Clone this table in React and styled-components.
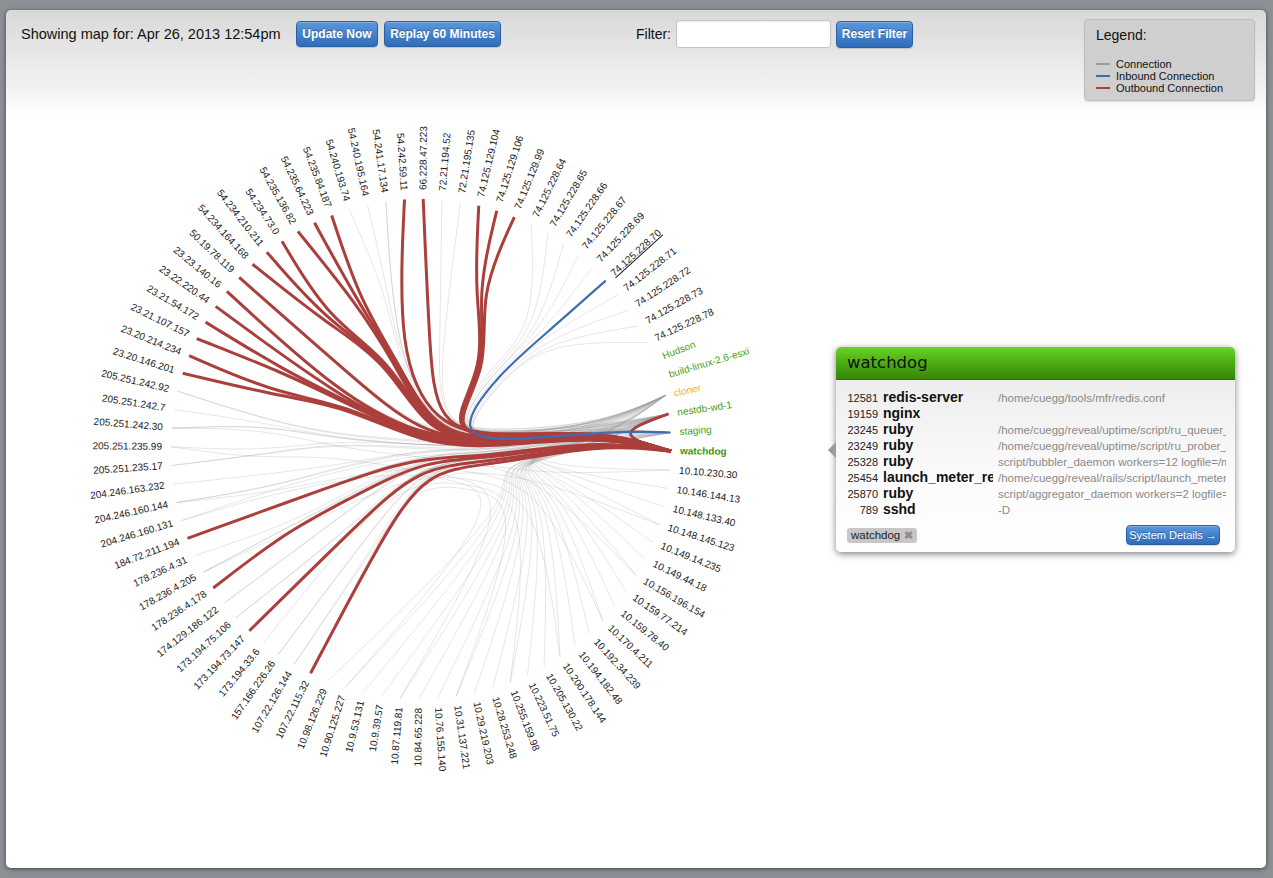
import React from 'react';
import styled, { createGlobalStyle, css } from 'styled-components';

const GlobalStyle = createGlobalStyle`
  html, body { margin: 0; padding: 0; }
  body {
    background: #8c8f94;
    font-family: "Liberation Sans", Arial, sans-serif;
    width: 1273px;
    height: 878px;
    overflow: hidden;
  }
`;

/* ------------------------------------------------------------------ data */

const NAMES = [
  'watchdog',
  '10.10.230.30', '10.146.144.13', '10.148.133.40', '10.148.145.123', '10.149.14.235',
  '10.149.44.18', '10.156.196.154', '10.159.77.214', '10.159.78.40', '10.170.4.211',
  '10.192.34.239', '10.194.182.48', '10.200.178.144', '10.205.130.22', '10.223.51.75',
  '10.255.159.98', '10.28.253.248', '10.29.219.203', '10.31.137.221', '10.76.155.140',
  '10.84.65.228', '10.87.119.81', '10.9.39.57', '10.9.53.131', '10.90.125.227', '10.98.126.229',
  '107.22.115.32', '107.22.126.144', '157.166.226.26',
  '173.194.33.6', '173.194.73.147', '173.194.75.106', '174.129.186.122',
  '178.236.4.178', '178.236.4.205', '178.236.4.31', '184.72.211.194',
  '204.246.160.131', '204.246.160.144', '204.246.163.232',
  '205.251.235.17', '205.251.235.99', '205.251.242.30', '205.251.242.7', '205.251.242.92',
  '23.20.146.201', '23.20.214.234', '23.21.107.157', '23.21.54.172', '23.22.220.44', '23.23.140.16',
  '50.19.78.119',
  '54.234.164.168', '54.234.210.211', '54.234.73.0', '54.235.136.82', '54.235.64.223',
  '54.235.84.187', '54.240.193.74', '54.240.195.164', '54.241.17.134', '54.242.59.11',
  '66.228.47.223', '72.21.194.52', '72.21.195.135',
  '74.125.129.104', '74.125.129.106', '74.125.129.99',
  '74.125.228.64', '74.125.228.65', '74.125.228.66', '74.125.228.67', '74.125.228.69',
  '74.125.228.70', '74.125.228.71', '74.125.228.72', '74.125.228.73', '74.125.228.78',
  'Hudson', 'build-linux-2.6-esxi', 'cloner', 'nestdb-wd-1', 'staging',
];

const N = NAMES.length;
const R = 250;
const CX = 415;
const CY = 339;
const THETA0 = 0.5;
const angleOf = (i) => THETA0 + (i * 360) / N;

const HOSTS = { 0: 'bold', 79: 'green', 80: 'green', 81: 'yellow', 82: 'green', 83: 'green' };

/* ------------------------------------------------------- hierarchy */

function buildTree() {
  const root = { a: 0, r: 0, parent: null };
  const inner = { a: 3, r: 0.25 * R, parent: root };
  const hosts = { a: -4.5, r: 0.72 * R, parent: inner };
  const g10 = { a: 10, r: 0.5 * R, parent: inner };
  const leaves = NAMES.map((name, i) => ({ a: angleOf(i), r: R, parent: null }));

  Object.keys(HOSTS).forEach((k) => { leaves[k].parent = hosts; });
  for (let i = 1; i <= 26; i += 1) leaves[i].parent = g10;

  // external groups by first octet, sub groups by a distinguishing prefix
  const groups = {};
  for (let i = 27; i <= 78; i += 1) {
    const oct = NAMES[i].split('.');
    (groups[oct[0]] = groups[oct[0]] || []).push(i);
  }
  Object.values(groups).forEach((members) => {
    const a0 = angleOf(members[0]);
    const a1 = angleOf(members[members.length - 1]);
    const g = { a: (a0 + a1) / 2, r: 0.35 * R, parent: root };
    const two = new Set(members.map((m) => NAMES[m].split('.').slice(0, 2).join('.')));
    const depth = two.size > 1 ? 2 : 3;
    const subs = {};
    members.forEach((m) => {
      const key = NAMES[m].split('.').slice(0, depth).join('.');
      (subs[key] = subs[key] || []).push(m);
    });
    Object.values(subs).forEach((sm) => {
      if (sm.length < 2) { leaves[sm[0]].parent = g; return; }
      const s = {
        a: (angleOf(sm[0]) + angleOf(sm[sm.length - 1])) / 2,
        r: 0.62 * R,
        parent: g,
      };
      sm.forEach((m) => { leaves[m].parent = s; });
    });
  });
  return leaves;
}

const LEAVES = buildTree();

const xy = (n) => {
  const t = (n.a * Math.PI) / 180;
  return [n.r * Math.cos(t), n.r * Math.sin(t)];
};

function ancestors(n) {
  const out = [];
  let c = n;
  while (c) { out.push(c); c = c.parent; }
  return out;
}

function nodePath(s, t) {
  const as = ancestors(s);
  const at = ancestors(t);
  let lca = null;
  for (const a of as) { if (at.includes(a)) { lca = a; break; } }
  const up = as.slice(0, as.indexOf(lca) + 1);
  const down = at.slice(0, at.indexOf(lca)).reverse();
  return [...up, ...down];
}

function bundlePath(pts, beta = 0.85) {
  const j = pts.length - 1;
  const [x0, y0] = pts[0];
  const dx = pts[j][0] - x0;
  const dy = pts[j][1] - y0;
  const q = pts.map(([x, y], i) => {
    const t = i / j;
    return [beta * x + (1 - beta) * (x0 + t * dx), beta * y + (1 - beta) * (y0 + t * dy)];
  });
  let d = '';
  let px0; let py0; let px1; let py1; let state = 0;
  const f = (v) => v.toFixed(2);
  const bez = (x, y) => {
    d += `C${f((2 * px0 + px1) / 3)},${f((2 * py0 + py1) / 3)},${f((px0 + 2 * px1) / 3)},${f((py0 + 2 * py1) / 3)},${f((px0 + 4 * px1 + x) / 6)},${f((py0 + 4 * py1 + y) / 6)}`;
  };
  q.forEach(([x, y]) => {
    if (state === 0) { state = 1; d += `M${f(x)},${f(y)}`; }
    else if (state === 1) { state = 2; }
    else {
      if (state === 2) { state = 3; d += `L${f((5 * px0 + px1) / 6)},${f((5 * py0 + py1) / 6)}`; }
      bez(x, y);
    }
    px0 = px1; px1 = x; py0 = py1; py1 = y;
  });
  if (state === 3) { bez(px1, py1); d += `L${f(px1)},${f(py1)}`; }
  else if (state === 2) d += `L${f(px1)},${f(py1)}`;
  return d;
}

const edgeD = (s, t) => bundlePath(nodePath(LEAVES[s], LEAVES[t]).map(xy));

const RED = [27, 31, 34, 37, 46, 47, 48, 49, 50, 51, 52, 53, 54, 55, 56, 57, 58, 62, 63, 66, 67, 68, 82];

const GRAY = (() => {
  const e = [];
  const hs = [81, 82, 83];
  for (let i = 1; i <= 26; i += 1) e.push([i, hs[i % 3]]);
  for (let i = 1; i <= 26; i += 3) e.push([i, 27 + ((i * 5) % 19)]);
  for (let j = 27; j <= 78; j += 1) e.push([j, hs[j % 3]]);
  for (let j = 27; j <= 45; j += 2) e.push([j, 82]);
  for (let j = 46; j <= 62; j += 3) e.push([j, 81]);
  e.push([81, 83]);
  return e;
})();

/* --------------------------------------------------------------- styles */

const Panel = styled.div`
  margin: 10px 7px 0 6px;
  width: 1260px;
  height: 858px;
  border-radius: 5px;
  background: linear-gradient(#d8d8d8 0px, #f3f3f3 80px, #ffffff 105px);
  box-shadow: 0 1px 4px rgba(0, 0, 0, 0.55);
  display: flex;
  flex-direction: column;
  overflow: hidden;
`;

const Header = styled.header`
  height: 100px;
  flex: 0 0 100px;
  box-sizing: border-box;
  padding: 10px 11px 0 15px;
  display: flex;
  align-items: flex-start;
`;

const ControlRow = styled.div`
  display: flex;
  align-items: center;
  height: 28px;
  gap: ${(p) => p.$gap || 6}px;
  margin-left: ${(p) => p.$offset || 0}px;
`;

const Title = styled.span`
  width: 269px;
  font-size: 14.5px;
  color: #111;
  white-space: nowrap;
`;

const Button = styled.button`
  box-sizing: border-box;
  width: ${(p) => p.$w}px;
  height: ${(p) => p.$h || 26}px;
  padding: 0;
  border: 1px solid #2b5fa3;
  border-radius: 4px;
  background: linear-gradient(#5b97dc, #2f6dbb);
  color: #fff;
  font-family: "Liberation Sans", Arial, sans-serif;
  font-size: ${(p) => (p.$plain ? 11 : 12)}px;
  font-weight: ${(p) => (p.$plain ? 400 : 700)};
  text-shadow: 0 -1px 0 rgba(0, 0, 0, 0.3);
  box-shadow: inset 0 1px 0 rgba(255, 255, 255, 0.25), 0 1px 1px rgba(0, 0, 0, 0.15);
  white-space: nowrap;
  cursor: pointer;
`;

const FilterLabel = styled.span`
  font-size: 14px;
  color: #111;
`;

const FilterInput = styled.input`
  box-sizing: border-box;
  width: 155px;
  height: 28px;
  border: 1px solid #c4c4c4;
  border-radius: 3px;
  background: #fff;
  box-shadow: inset 0 1px 2px rgba(0, 0, 0, 0.08);
  outline: none;
`;

const Legend = styled.div`
  margin-left: auto;
  margin-top: -1px;
  box-sizing: border-box;
  width: 171px;
  height: 82px;
  padding: 6px 11px 0;
  background: #cfcfcf;
  border: 1px solid #bdbdbd;
  border-radius: 4px;
  box-shadow: 0 1px 2px rgba(0, 0, 0, 0.1);
`;

const LegendTitle = styled.div`
  font-size: 14px;
  line-height: 18px;
  color: #111;
  margin-bottom: 14px;
`;

const LegendItem = styled.div`
  display: flex;
  align-items: center;
  height: 12px;
  font-size: 11px;
  color: #111;
`;

const Swatch = styled.span`
  width: 14px;
  height: 2px;
  margin-right: 6px;
  background: ${(p) => p.$color};
`;

const Stage = styled.main`
  position: relative;
  flex: 1;
`;

const Chart = styled.svg`
  display: block;
`;

const Link = styled.path`
  fill: none;
  ${(p) => p.$kind === 'gray' && css`
    stroke: rgba(160, 160, 160, 0.26);
    stroke-width: 1;
  `}
  ${(p) => p.$kind === 'red' && css`
    stroke: #ab3f3b;
    stroke-width: 3;
  `}
  ${(p) => p.$kind === 'blue' && css`
    stroke: #3d6eb4;
    stroke-width: 2.2;
  `}
`;

const TONES = {
  plain: '#1a1a1a',
  green: '#4a9c17',
  bold: '#3e940d',
  yellow: '#f2b400',
};

const Label = styled.text`
  font-family: "Liberation Sans", Arial, sans-serif;
  font-size: 10px;
  fill: ${(p) => TONES[p.$tone]};
  font-weight: ${(p) => (p.$tone === 'bold' ? 700 : 400)};
  text-decoration: ${(p) => (p.$under ? 'underline' : 'none')};
`;

const Popup = styled.aside`
  position: absolute;
  left: 830px;
  top: 237px;
  width: 399px;
  border-radius: 5px;
  background: linear-gradient(#e9e9e9, #fafafa 60%, #ffffff);
  box-shadow: 0 2px 7px rgba(0, 0, 0, 0.5);
`;

const Arrow = styled.span`
  position: absolute;
  left: -8px;
  top: 95px;
  width: 0;
  height: 0;
  border-top: 8px solid transparent;
  border-bottom: 8px solid transparent;
  border-right: 8px solid #9a9a9a;
`;

const PopupHead = styled.div`
  height: 32px;
  padding-left: 11px;
  border-radius: 5px 5px 0 0;
  background: linear-gradient(#68d424, #4aa712 55%, #388608);
  border-bottom: 1px solid #2f6e08;
  font-family: "DejaVu Sans", "Liberation Sans", sans-serif;
  font-size: 16.5px;
  line-height: 32px;
  color: #111;
`;

const PopupBody = styled.div`
  padding: 9px 10px 7px 11px;
`;

const ProcRow = styled.div`
  display: grid;
  grid-template-columns: 31px 110px 228px;
  column-gap: 5px;
  align-items: baseline;
  height: 16px;
  line-height: 16px;
  white-space: nowrap;
`;

const Pid = styled.span`
  text-align: right;
  font-size: 11px;
  color: #222;
`;

const ProcName = styled.span`
  font-size: 14px;
  font-weight: 700;
  color: #111;
  overflow: hidden;
  text-overflow: clip;
`;

const ProcCmd = styled.span`
  font-size: 11.5px;
  color: #8a8a8a;
  overflow: hidden;
  text-overflow: clip;
`;

const PopupFoot = styled.div`
  display: flex;
  align-items: center;
  justify-content: space-between;
  margin-top: 8px;
  padding-right: 5px;
`;

const Tag = styled.span`
  display: inline-flex;
  align-items: center;
  gap: 4px;
  height: 15px;
  padding: 0 4px;
  border-radius: 3px;
  background: #c7c7c7;
  font-size: 11.5px;
  color: #222;
`;

const TagX = styled.span`
  font-size: 11px;
  font-weight: 700;
  color: #8c8c8c;
`;

/* ----------------------------------------------------------------- view */

const PROCS = [
  ['12581', 'redis-server', '/home/cuegg/tools/mfr/redis.conf'],
  ['19159', 'nginx', ''],
  ['23245', 'ruby', '/home/cuegg/reveal/uptime/script/ru_queuer_'],
  ['23249', 'ruby', '/home/cuegg/reveal/uptime/script/ru_prober_'],
  ['25328', 'ruby', 'script/bubbler_daemon workers=12 logfile=/m'],
  ['25454', 'launch_meter_re', '/home/cuegg/reveal/rails/script/launch_meter'],
  ['25870', 'ruby', 'script/aggregator_daemon workers=2 logfile='],
  ['789', 'sshd', '-D'],
];

function Labels() {
  return NAMES.map((name, i) => {
    const a = angleOf(i);
    const flip = a > 90 && a < 270;
    return (
      <Label
        key={name}
        $tone={HOSTS[i] || 'plain'}
        $under={name === '74.125.228.70'}
        dy="0.31em"
        textAnchor={flip ? 'end' : 'start'}
        transform={`rotate(${a.toFixed(3)}) translate(${R + 9}, 0)${flip ? ' rotate(180)' : ''}`}
      >
        {name}
      </Label>
    );
  });
}

export default function App() {
  return (
    <>
      <GlobalStyle />
      <Panel>
        <Header>
          <ControlRow>
            <Title>Showing map for: Apr 26, 2013 12:54pm</Title>
            <Button $w={82}>Update Now</Button>
            <Button $w={117}>Replay 60 Minutes</Button>
          </ControlRow>
          <ControlRow $offset={135} $gap={5}>
            <FilterLabel>Filter:</FilterLabel>
            <FilterInput />
            <Button $w={77} $h={27}>Reset Filter</Button>
          </ControlRow>
          <Legend>
            <LegendTitle>Legend:</LegendTitle>
            <LegendItem><Swatch $color="#9b9b9b" />Connection</LegendItem>
            <LegendItem><Swatch $color="#3d6eb4" />Inbound Connection</LegendItem>
            <LegendItem><Swatch $color="#b0403b" />Outbound Connection</LegendItem>
          </Legend>
        </Header>
        <Stage>
          <Chart width="850" height="740">
            <g transform={`translate(${CX}, ${CY})`}>
              {GRAY.map(([s, t], k) => <Link key={`g${k}`} $kind="gray" d={edgeD(s, t)} />)}
              {RED.map((t) => <Link key={`r${t}`} $kind="red" d={edgeD(0, t)} />)}
              <Link $kind="blue" d={edgeD(83, 74)} />
              <Labels />
            </g>
          </Chart>
          <Popup>
            <Arrow />
            <PopupHead>watchdog</PopupHead>
            <PopupBody>
              {PROCS.map(([pid, name, cmd]) => (
                <ProcRow key={pid}>
                  <Pid>{pid}</Pid>
                  <ProcName>{name}</ProcName>
                  <ProcCmd>{cmd}</ProcCmd>
                </ProcRow>
              ))}
              <PopupFoot>
                <Tag>watchdog<TagX>✖</TagX></Tag>
                <Button $w={94} $h={20} $plain>System Details →</Button>
              </PopupFoot>
            </PopupBody>
          </Popup>
        </Stage>
      </Panel>
    </>
  );
}
